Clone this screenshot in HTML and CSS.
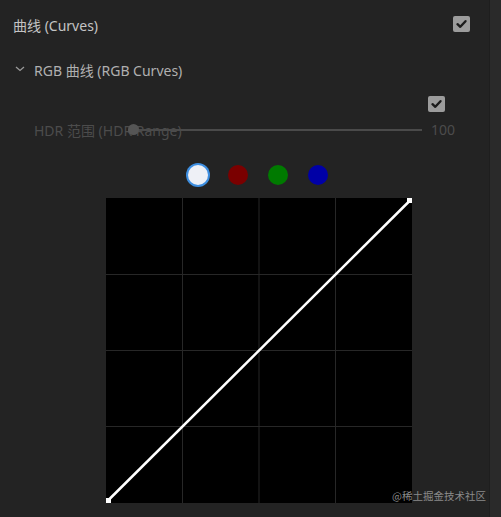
FILE: index.html
```html
<!DOCTYPE html>
<html lang="zh">
  <head>
    <meta charset="UTF-8" />
    <title>曲线 (Curves)</title>
    <link rel="stylesheet" href="styles.css">
  </head>
  <body>
    <div class="panel">
      <div class="row row-title">
        <span class="title">曲线 (Curves)</span>
        <span class="checkbox"><svg viewBox="0 0 17 16" width="17" height="16"><path d="M4.5 8.2 L7.3 10.8 L12.5 5.2" fill="none" stroke="#1c1c1c" stroke-width="2.4" stroke-linecap="round" stroke-linejoin="round"/></svg></span>
      </div>

      <div class="row row-section">
        <svg class="chevron" viewBox="0 0 10 6" width="10" height="6"><path d="M1 1 L5 4.5 L9 1" fill="none" stroke="#9a9a9a" stroke-width="1.3"/></svg>
        <span class="section">RGB 曲线 (RGB Curves)</span>
      </div>

      <div class="row row-check">
        <span class="checkbox"><svg viewBox="0 0 17 16" width="17" height="16"><path d="M4.5 8.2 L7.3 10.8 L12.5 5.2" fill="none" stroke="#1c1c1c" stroke-width="2.4" stroke-linecap="round" stroke-linejoin="round"/></svg></span>
      </div>

      <div class="row row-hdr">
        <span class="disabled">HDR 范围 (HDR Range)</span>
        <div class="slider">
          <span class="thumb"></span>
        </div>
        <span class="value">100</span>
      </div>

      <div class="channels">
        <span class="dot white selected"></span>
        <span class="dot red"></span>
        <span class="dot green"></span>
        <span class="dot blue"></span>
      </div>

      <div class="graph">
        <svg viewBox="0 0 306 305" width="306" height="305">
          <rect width="306" height="305" fill="#000"/>
          <g stroke="#272727" stroke-width="1">
            <line x1="76.5" y1="0" x2="76.5" y2="305"/>
            <line x1="153" y1="0" x2="153" y2="305"/>
            <line x1="229.5" y1="0" x2="229.5" y2="305"/>
            <line x1="0" y1="76.5" x2="306" y2="76.5"/>
            <line x1="0" y1="152.5" x2="306" y2="152.5"/>
            <line x1="0" y1="228.5" x2="306" y2="228.5"/>
          </g>
          <line x1="2.5" y1="302" x2="303.5" y2="3" stroke="#fff" stroke-width="2.5"/>
          <rect x="0" y="300" width="5" height="5" fill="#fff"/>
          <rect x="301" y="0" width="5" height="5" fill="#fff"/>
        </svg>
      </div>

      <span class="watermark">@稀土掘金技术社区</span>
    </div>
    <div class="scrollbar"></div>
  </body>
</html>
```

FILE: styles.css
```css
body {
  margin: 0;
  padding: 0;
  height: 517px;
  display: flex;
  background-color: #232323;
  font-family: "Noto Sans", "Noto Sans CJK SC", sans-serif;
  overflow: hidden;
}

.panel {
  position: relative;
  width: 489px;
  height: 100%;
}

.scrollbar {
  flex: 1;
  background-color: #2a2a2a;
  border-left: 1px solid #1e1e1e;
}

.row {
  display: flex;
  align-items: center;
}

/* Header */
.row-title {
  height: 26px;
  padding: 12px 19px 0 13px;
  justify-content: space-between;
}

.title {
  font-size: 14px;
  color: #c4c4c4;
}

.checkbox {
  display: block;
  width: 17px;
  height: 16px;
  background-color: #9c9c9c;
  border-radius: 2px;
}

.row-title .checkbox {
  margin-top: -3px;
}

.checkbox svg {
  display: block;
}

/* RGB section */
.row-section {
  height: 26px;
  margin-top: 19px;
  padding-left: 15px;
}

.chevron {
  margin-right: 9px;
  margin-top: -3px;
}

.section {
  font-size: 14px;
  color: #b0b0b0;
}

.row-check {
  height: 17px;
  margin-top: 12px;
  justify-content: flex-end;
  padding-right: 44px;
}

/* HDR slider row (disabled) */
.row-hdr {
  position: relative;
  height: 22px;
  margin-top: 7px;
  padding-left: 34px;
}

.disabled {
  font-size: 14px;
  color: #4c4c4c;
}

.slider {
  position: absolute;
  left: 128px;
  top: 10px;
  width: 294px;
  height: 2px;
  background-color: #4a4a4a;
}

.thumb {
  position: absolute;
  left: 0;
  top: -5px;
  width: 11px;
  height: 11px;
  border-radius: 50%;
  background-color: #555;
}

.value {
  position: absolute;
  left: 431px;
  top: 1px;
  font-size: 14px;
  color: #4c4c4c;
}

/* Channel picker */
.channels {
  display: flex;
  gap: 20px;
  margin-top: 24px;
  padding-left: 188px;
  height: 20px;
}

.dot {
  display: block;
  width: 20px;
  height: 20px;
  border-radius: 50%;
}

.dot.white {
  background-color: #eef0f6;
}

.dot.selected {
  box-shadow: 0 0 0 2px #3d8ee0;
}

.dot.red {
  background-color: #7a0000;
}

.dot.green {
  background-color: #007a00;
}

.dot.blue {
  background-color: #0000a6;
}

/* Curve graph */
.graph {
  margin-top: 13px;
  margin-left: 106px;
  width: 306px;
  height: 305px;
}

.graph svg {
  display: block;
}

.watermark {
  position: absolute;
  left: 392px;
  top: 488px;
  font-size: 10.5px;
  color: #8a8a8a;
  white-space: nowrap;
  font-family: "Noto Sans CJK SC", sans-serif;
}
```
